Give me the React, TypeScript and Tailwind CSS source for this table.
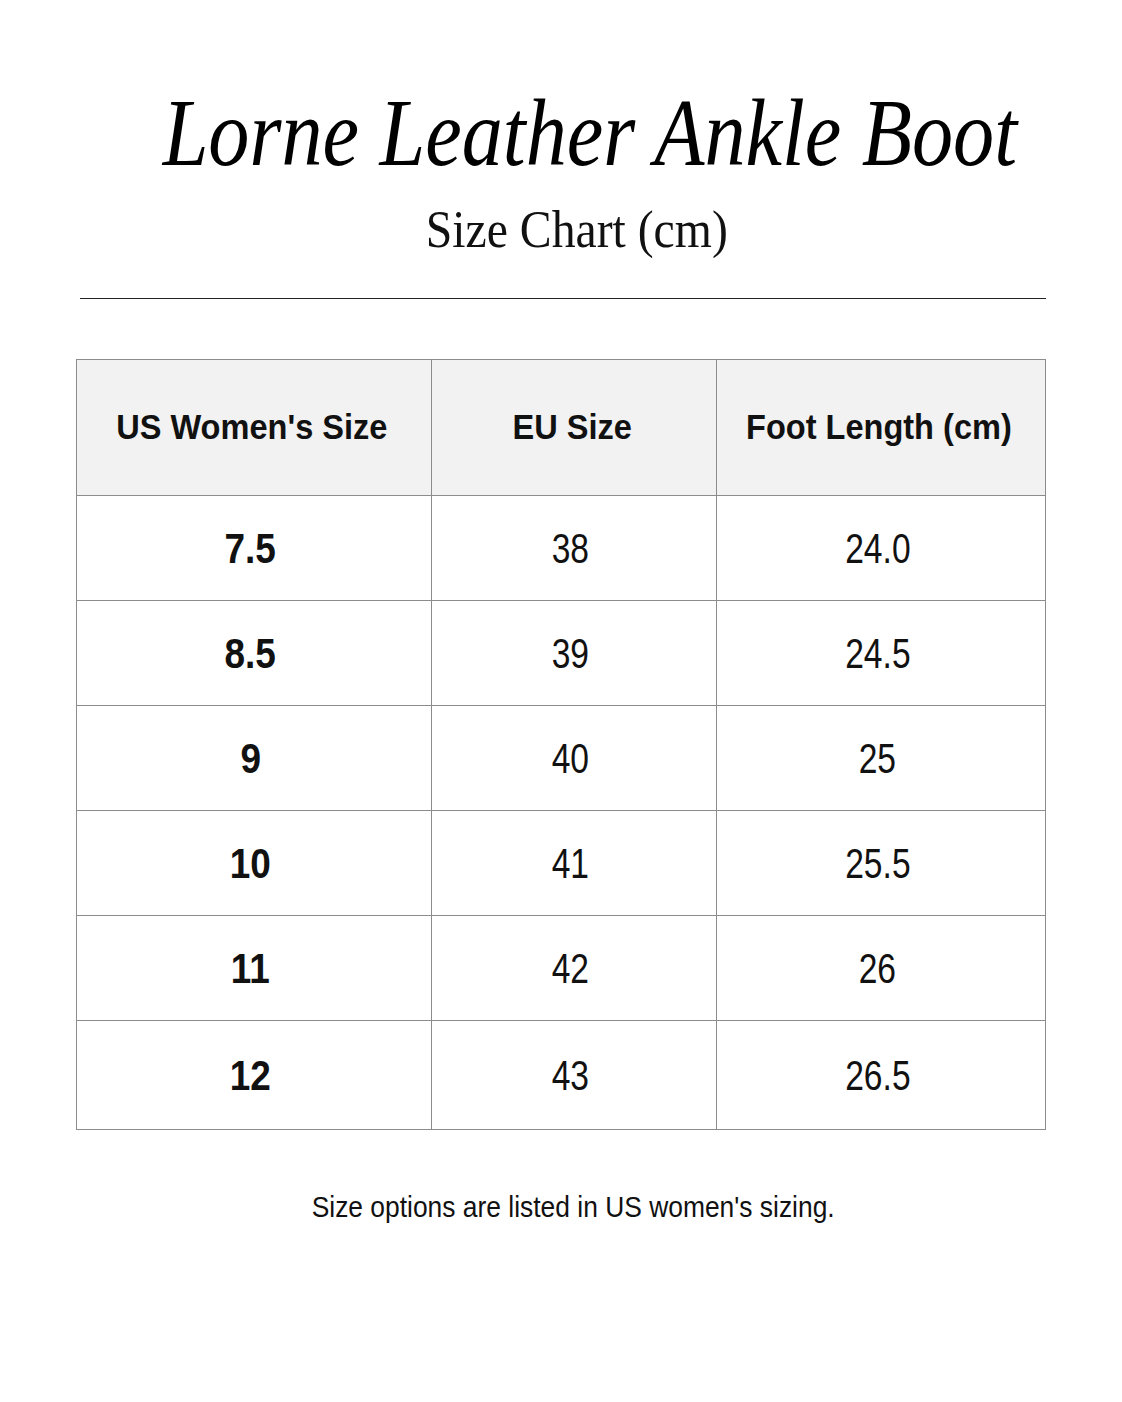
import React from "react";

const rows = [
  ["7.5", "38", "24.0"],
  ["8.5", "39", "24.5"],
  ["9", "40", "25"],
  ["10", "41", "25.5"],
  ["11", "42", "26"],
  ["12", "43", "26.5"],
];

export default function App() {
  return (
    <div className="w-[1122px] h-[1402px] bg-white flex flex-col items-center text-[#111]">
      <div className="pt-[86px] pl-[58px] h-[181px] leading-none font-['Liberation_Serif',serif] italic text-[95px] whitespace-nowrap text-black">
        <span className="inline-block scale-x-[0.865]">Lorne Leather Ankle Boot</span>
      </div>
      <div className="mt-[22px] pl-[32px] leading-none font-['Liberation_Serif',serif] text-[53px] whitespace-nowrap">
        <span className="inline-block scale-x-[0.9]">Size Chart (cm)</span>
      </div>
      <div className="mt-[42px] ml-[4px] w-[966px] border-t border-[#222]" />
      <table className="mt-[60px] w-[969px] border-collapse font-['Liberation_Sans',sans-serif] table-fixed">
        <colgroup>
          <col className="w-[355px]" />
          <col className="w-[285px]" />
          <col className="w-[329px]" />
        </colgroup>
        <thead>
          <tr className="h-[136px] bg-[#f2f2f2]">
            {["US Women's Size", "EU Size", "Foot Length (cm)"].map((h) => (
              <th key={h} className="border border-[#8c8c8c] text-center font-bold text-[35px] p-0 pr-[4px] whitespace-nowrap">
                <span className="inline-block scale-x-[0.93]">{h}</span>
              </th>
            ))}
          </tr>
        </thead>
        <tbody>
          {rows.map((r, i) => (
            <tr key={i} className={i === rows.length - 1 ? "h-[109px]" : "h-[105px]"}>
              <td className="border border-[#8c8c8c] text-center font-bold text-[42px] p-0 pr-[7px]">
                <span className="inline-block scale-x-[0.88]">{r[0]}</span>
              </td>
              <td className="border border-[#8c8c8c] text-center text-[42px] p-0 pr-[7px]">
                <span className="inline-block scale-x-[0.8]">{r[1]}</span>
              </td>
              <td className="border border-[#8c8c8c] text-center text-[42px] p-0 pr-[7px]">
                <span className="inline-block scale-x-[0.8]">{r[2]}</span>
              </td>
            </tr>
          ))}
        </tbody>
      </table>
      <div className="mt-[62px] pl-[24px] font-['Liberation_Sans',sans-serif] text-[30px] leading-none whitespace-nowrap">
        <span className="inline-block scale-x-[0.88]">Size options are listed in US women's sizing.</span>
      </div>
    </div>
  );
}
